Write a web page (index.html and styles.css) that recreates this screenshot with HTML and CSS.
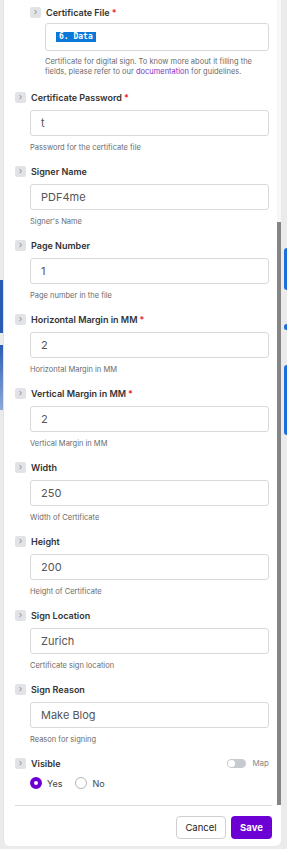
FILE: index.html
```html
<!DOCTYPE html>
<html lang="en">
<head>
  <meta charset="UTF-8">
  <meta name="viewport" content="width=device-width, initial-scale=1.0">
  <title>Sign PDF - Action settings</title>
  <link rel="stylesheet" href="styles.css">
</head>
<body>
  <div class="canvas">
    <!-- workflow nodes peeking out behind the panel -->
    <div class="node node-left-a"></div>
    <div class="node node-left-b"></div>
    <div class="node node-right-a"></div>
    <div class="node node-right-dot"></div>
    <div class="node node-right-b"></div>

    <div class="panel">
      <div class="scroll">
        <form class="form">

          <div class="field nested">
            <div class="field-head">
              <span class="chev">&rsaquo;</span>
              <label>Certificate File<span class="req">*</span></label>
            </div>
            <div class="input tall"><span class="chip">6. Data</span></div>
            <p class="help two-line">Certificate for digital sign. To know more about it filling the fields, please refer to our <a href="#">documentation</a> for guidelines.</p>
          </div>

          <div class="field">
            <div class="field-head">
              <span class="chev">&rsaquo;</span>
              <label>Certificate Password<span class="req">*</span></label>
            </div>
            <div class="input">t</div>
            <p class="help">Password for the certificate file</p>
          </div>

          <div class="field">
            <div class="field-head">
              <span class="chev">&rsaquo;</span>
              <label>Signer Name</label>
            </div>
            <div class="input">PDF4me</div>
            <p class="help">Signer's Name</p>
          </div>

          <div class="field">
            <div class="field-head">
              <span class="chev">&rsaquo;</span>
              <label>Page Number</label>
            </div>
            <div class="input">1</div>
            <p class="help">Page number in the file</p>
          </div>

          <div class="field">
            <div class="field-head">
              <span class="chev">&rsaquo;</span>
              <label>Horizontal Margin in MM<span class="req">*</span></label>
            </div>
            <div class="input">2</div>
            <p class="help">Horizontal Margin in MM</p>
          </div>

          <div class="field">
            <div class="field-head">
              <span class="chev">&rsaquo;</span>
              <label>Vertical Margin in MM<span class="req">*</span></label>
            </div>
            <div class="input">2</div>
            <p class="help">Vertical Margin in MM</p>
          </div>

          <div class="field">
            <div class="field-head">
              <span class="chev">&rsaquo;</span>
              <label>Width</label>
            </div>
            <div class="input">250</div>
            <p class="help">Width of Certificate</p>
          </div>

          <div class="field">
            <div class="field-head">
              <span class="chev">&rsaquo;</span>
              <label>Height</label>
            </div>
            <div class="input">200</div>
            <p class="help">Height of Certificate</p>
          </div>

          <div class="field">
            <div class="field-head">
              <span class="chev">&rsaquo;</span>
              <label>Sign Location</label>
            </div>
            <div class="input">Zurich</div>
            <p class="help">Certificate sign location</p>
          </div>

          <div class="field">
            <div class="field-head">
              <span class="chev">&rsaquo;</span>
              <label>Sign Reason</label>
            </div>
            <div class="input">Make Blog</div>
            <p class="help">Reason for signing</p>
          </div>

          <div class="field last">
            <div class="field-head">
              <span class="chev">&rsaquo;</span>
              <label>Visible</label>
              <span class="map-toggle"><span class="switch"></span>Map</span>
            </div>
            <div class="radios">
              <span class="radio checked"></span><span class="radio-label">Yes</span>
              <span class="radio"></span><span class="radio-label">No</span>
            </div>
          </div>

        </form>
        <div class="scrollbar"><div class="thumb"></div></div>
      </div>

      <div class="footer">
        <button class="btn btn-cancel" type="button">Cancel</button>
        <button class="btn btn-save" type="button">Save</button>
      </div>
    </div>
  </div>
</body>
</html>
```

FILE: styles.css
```css
* {
  box-sizing: border-box;
}

body {
  margin: 0;
  height: 849px;
  overflow: hidden;
  background-color: #ebebeb;
  font-family: Inter, "Noto Sans", Arial, sans-serif;
  color: #333;
}

.canvas {
  position: relative;
  height: 849px;
}

.node {
  position: absolute;
  background-color: #1f6fd8;
}

.node-left-a {
  left: 0;
  top: 280px;
  width: 3px;
  height: 53px;
  background-color: #2b5cb3;
}

.node-left-b {
  left: 0;
  top: 345px;
  width: 3px;
  height: 65px;
  background: linear-gradient(#2b5cb3, #8fa9d9);
}

.node-right-a {
  left: 284px;
  top: 248px;
  width: 6px;
  height: 42px;
  border-radius: 3px;
}

.node-right-dot {
  left: 284px;
  top: 324px;
  width: 5px;
  height: 6px;
  border-radius: 3px;
}

.node-right-b {
  left: 284px;
  top: 365px;
  width: 6px;
  height: 70px;
  border-radius: 3px;
}

.panel {
  position: relative;
  margin-left: 3px;
  width: 278px;
  height: 846px;
  background-color: white;
  border-left: 1px solid #e2e2e2;
  border-radius: 0 0 6px 6px;
  display: flex;
  flex-direction: column;
}

.scroll {
  display: flex;
  height: 805px;
}

.form {
  flex: 1;
  padding: 5px 8px 0 11px;
}

.scrollbar {
  width: 4px;
  background-color: #f7f7f7;
}

.thumb {
  margin-top: 222px;
  height: 583px;
  background-color: #858585;
}

/* fields */

.field {
  margin-bottom: 11px;
}

.field.nested {
  margin-left: 15px;
  margin-bottom: 13px;
}

.field-head {
  display: flex;
  align-items: center;
  gap: 5px;
  height: 14px;
}

.chev {
  width: 11px;
  height: 11px;
  border-radius: 2px;
  background-color: #e1e3e6;
  color: #8a8f96;
  font-size: 9px;
  line-height: 10px;
  text-align: center;
}

.field-head label {
  font-size: 9px;
  font-weight: 600;
  color: #333;
}

.req {
  color: #e5252a;
  margin-left: 2px;
}

.input {
  margin: 6px 0 0 15px;
  height: 26px;
  border: 1px solid #d9d9d9;
  border-radius: 3px;
  padding: 0 10px;
  display: flex;
  align-items: center;
  font-size: 11px;
  color: #555;
}

.nested .input {
  margin: 4px 0 0 15px;
}

.input.tall {
  height: 28px;
}

.chip {
  background-color: #0a78d8;
  color: white;
  font-family: "DejaVu Sans Mono", "Liberation Mono", monospace;
  font-weight: bold;
  font-size: 8px;
  padding: 0 3px;
  height: 10px;
  line-height: 10px;
}

.help {
  margin: 6px 0 0 15px;
  font-size: 7.5px;
  line-height: 11px;
  color: #6b6b6b;
}

.help.two-line {
  line-height: 10px;
}

.help a {
  color: #7b2fc4;
  text-decoration: none;
}

/* visible row */

.map-toggle {
  margin-left: auto;
  display: flex;
  align-items: center;
  gap: 6px;
  font-size: 8px;
  color: #888;
}

.switch {
  width: 19px;
  height: 9px;
  border-radius: 5px;
  background-color: #c7cacf;
  position: relative;
}

.switch:before {
  content: "";
  position: absolute;
  left: 1px;
  top: 1px;
  width: 7px;
  height: 7px;
  border-radius: 50%;
  background-color: white;
}

.radios {
  margin: 7px 0 0 15px;
  display: flex;
  align-items: center;
}

.radio {
  width: 12px;
  height: 12px;
  border-radius: 50%;
  border: 1px solid #b5b5b5;
  margin-right: 5px;
}

.radio.checked {
  border: 4px solid #6c00d4;
}

.radio-label {
  font-size: 9px;
  color: #444;
  margin-right: 13px;
}

/* footer */

.footer {
  margin: 0 9px 0 11px;
  border-top: 1px solid #dcdcdc;
  padding-top: 10px;
  display: flex;
  justify-content: flex-end;
  gap: 5px;
}

.btn {
  height: 23px;
  border-radius: 4px;
  font-family: Inter, "Noto Sans", Arial, sans-serif;
  font-size: 9.5px;
  cursor: pointer;
}

.btn-cancel {
  width: 50px;
  background-color: white;
  border: 1px solid #cfcfcf;
  color: #222;
}

.btn-save {
  width: 41px;
  background-color: #6c00d4;
  border: none;
  color: white;
  font-weight: 700;
}
```
